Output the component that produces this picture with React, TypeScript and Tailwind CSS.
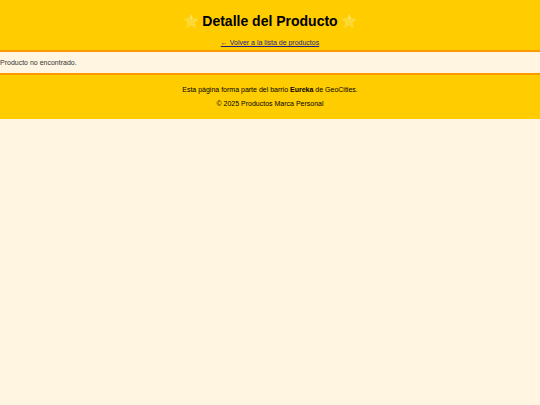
function Star() {
  return (
    <svg viewBox="0 0 24 24" className="size-4 shrink-0" aria-hidden="true">
      <path
        d="M12 1.8 L14.8 8.6 L22.3 9.2 L16.7 14.1 L18.6 21.8 L12 17.8 L5.4 21.8 L7.3 14.1 L1.7 9.2 L9.2 8.6 Z"
        fill="#fdd835"
        stroke="#fdd835"
        strokeWidth="1.5"
        strokeLinejoin="round"
      />
      <path d="M12 3 L12.6 10 L14.2 8.8 Z" fill="#fff59d" />
      <path d="M12.8 10.4 L14.2 8.8 L14.6 9.8 Z" fill="#f4b400" />
      <path d="M16 12.2 L20.6 9.8 L16 13.2 Z" fill="#fff176" />
    </svg>
  );
}

export default function App() {
  return (
    <div className="min-h-screen bg-[#fff5e1] font-['Liberation_Sans',Arial,sans-serif] text-[7px] leading-[10px] text-[#333333]">
      <header className="border-b-2 border-[#ff9900] bg-[#ffcc00] pt-3 pb-1 text-center text-black">
        <h1 className="mb-[10px] flex items-center justify-center gap-[3px] text-[14px] leading-[18px] font-bold">
          <Star />
          <span>Detalle del Producto</span>
          <Star />
        </h1>
        <nav className="leading-[6px]">
          <a href="#productos" className="text-[#1c1c8c] underline">
            ← Volver a la lista de productos
          </a>
        </nav>
      </header>
      <main className="pt-[6px] pb-[5px]">
        <p>Producto no encontrado.</p>
      </main>
      <footer className="border-t-2 border-[#ff9900] bg-[#ffcc00] pt-[10px] pb-[10px] text-center text-black">
        <p className="mb-1">
          Esta página forma parte del barrio <strong>Eureka</strong> de GeoCities.
        </p>
        <p>© 2025 Productos Marca Personal</p>
      </footer>
    </div>
  );
}
